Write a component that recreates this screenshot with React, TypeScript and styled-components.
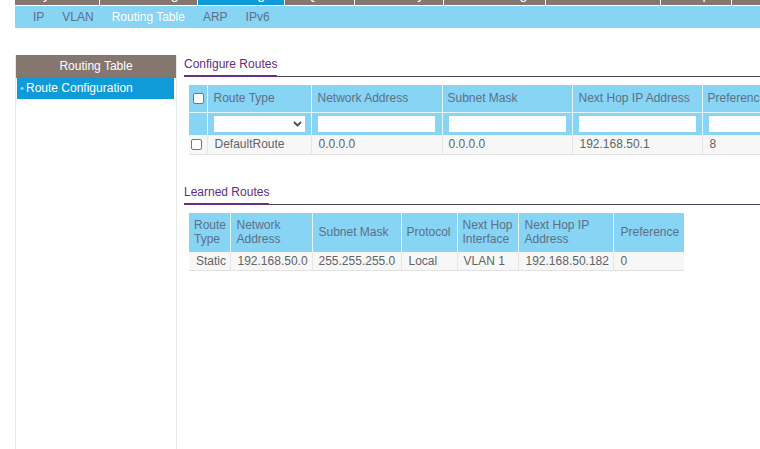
import React from 'react';
import styled, { createGlobalStyle } from 'styled-components';

const GlobalStyle = createGlobalStyle`
  html, body {
    margin: 0;
    padding: 0;
    background: #fff;
    overflow: hidden;
  }
  body {
    font-family: "Liberation Sans", Arial, sans-serif;
    font-size: 12px;
    color: #5b6670;
  }
`;

const Page = styled.div`
  width: 760px;
  height: 449px;
  overflow: hidden;
  padding-left: 15px;
  box-sizing: border-box;
`;

const TabBar = styled.div`
  display: flex;
  height: 5px;
  width: 800px;
  gap: 1px;
  overflow: hidden;
  margin-bottom: 1px;
`;

const Tab = styled.div<{ $w: number; $active?: boolean }>`
  flex: 0 0 ${(p) => p.$w}px;
  height: 5px;
  background: ${(p) => (p.$active ? '#0f9bd7' : '#85766f')};
  color: #fff;
  font-size: 14px;
  line-height: 16px;
  display: flex;
  align-items: flex-end;
  justify-content: center;
  white-space: nowrap;
`;

const TabLabel = styled.span`
  display: block;
  flex: none;
  margin-bottom: 3px;
`;

const SubNav = styled.div`
  display: flex;
  height: 22px;
  background: #87d4f5;
  align-items: center;
  padding-left: 18px;
  gap: 18px;
  font-size: 12px;
  margin-bottom: 27px;
`;

const SubItem = styled.span<{ $active?: boolean }>`
  color: ${(p) => (p.$active ? '#ffffff' : '#5c7085')};
`;

const Body = styled.div`
  display: flex;
  align-items: stretch;
  height: 394px;
`;

const Sidebar = styled.div`
  flex: 0 0 162px;
  box-sizing: border-box;
  border-right: 1px solid #e8e8e8;
  border-left: 1px solid #e8e8e8;
`;

const SideHead = styled.div`
  height: 23px;
  background: #85766f;
  color: #fff;
  text-align: center;
  line-height: 23px;
  font-size: 12px;
`;

const SideItem = styled.div`
  display: flex;
  align-items: center;
  height: 21px;
  margin: 0 2px 0 1px;
  background: #0f9bd7;
  color: #fff;
  font-size: 12px;
  padding-left: 3px;
  padding-bottom: 2px;
  box-sizing: border-box;
`;

const Bullet = styled.span`
  flex: 0 0 6px;
  color: #9adcf7;
  font-size: 11px;
`;

const Main = styled.div`
  flex: none;
  width: 576px;
  margin-left: 7px;
`;

const SectionHead = styled.div`
  height: 22px;
  box-sizing: border-box;
  border-bottom: 1px solid #4d4560;
`;

const SectionTitle = styled.span`
  display: inline-block;
  height: 22px;
  box-sizing: border-box;
  border-bottom: 2px solid #6a2c85;
  color: #5f2d83;
  font-size: 12px;
  line-height: 19px;
`;

const Table = styled.table<{ $w: number }>`
  border-collapse: collapse;
  table-layout: fixed;
  width: ${(p) => p.$w}px;
  margin-left: 5px;
  font-size: 12px;
`;

const Row = styled.tr<{ $h: number }>`
  height: ${(p) => p.$h}px;
`;

const HeadCell = styled.th<{ $pad?: number }>`
  background: #87d4f5;
  color: #5c7085;
  font-weight: normal;
  text-align: left;
  padding: 0 0 0 ${(p) => p.$pad ?? 5}px;
  border-left: 1px solid #e4f5fc;
  line-height: 14px;
  white-space: nowrap;
  overflow: hidden;
  &:first-child {
    border-left: none;
  }
`;

const FilterCell = styled.td`
  background: #87d4f5;
  padding: 1px 0 0 6px;
  height: 23px;
  box-sizing: border-box;
  border-top: 1px solid #e4f5fc;
  border-left: 1px solid #e4f5fc;
  &:first-child {
    border-left: none;
  }
`;

const DataCell = styled.td<{ $pad?: number }>`
  background: #f7f7f7;
  color: #5f6468;
  padding: 0 0 0 ${(p) => p.$pad ?? 6}px;
  border-left: 1px solid #e6e6e6;
  border-bottom: 1px solid #e2e2e2;
  white-space: nowrap;
  &:first-child {
    border-left: none;
  }
`;

const Check = styled.span<{ $left: number }>`
  display: block;
  width: 11px;
  height: 11px;
  box-sizing: border-box;
  background: #fff;
  border: 1px solid #73787c;
  border-radius: 2px;
  margin-left: ${(p) => p.$left}px;
`;

const FilterBox = styled.div`
  width: 117px;
  height: 16px;
  background: #fff;
`;

const FilterSelect = styled(FilterBox)`
  width: 91px;
  display: flex;
  align-items: center;
  justify-content: flex-end;
  padding-right: 3px;
  box-sizing: border-box;
`;

const Spacer = styled.div<{ $h: number }>`
  height: ${(p) => p.$h}px;
`;

const Chevron = () => (
  <svg width="9" height="6" viewBox="0 0 9 6" fill="none">
    <path d="M1 1l3.5 3.5L8 1" stroke="#555" strokeWidth="2" />
  </svg>
);

const tabs = [
  { label: 'System', w: 84 },
  { label: 'Switching', w: 97 },
  { label: 'Routing', w: 86, active: true },
  { label: 'QoS', w: 69 },
  { label: 'Security', w: 88 },
  { label: 'Monitoring', w: 101 },
  { label: 'Maintenance', w: 114 },
  { label: 'Help', w: 70 },
  { label: 'Index', w: 60 },
];

const subItems = ['IP', 'VLAN', 'Routing Table', 'ARP', 'IPv6'];

const configCols = [18, 104, 131, 130, 130, 63];
const learnedCols = [41, 82, 89, 56, 61, 95, 71];

export default function App() {
  return (
    <Page>
      <GlobalStyle />
      <TabBar>
        {tabs.map((t) => (
          <Tab key={t.label} $w={t.w} $active={t.active}>
            <TabLabel>{t.label}</TabLabel>
          </Tab>
        ))}
      </TabBar>
      <SubNav>
        {subItems.map((s) => (
          <SubItem key={s} $active={s === 'Routing Table'}>
            {s}
          </SubItem>
        ))}
      </SubNav>
      <Body>
        <Sidebar>
          <SideHead>Routing Table</SideHead>
          <SideItem>
            <Bullet>•</Bullet>
            Route Configuration
          </SideItem>
        </Sidebar>
        <Main>
          <SectionHead>
            <SectionTitle>Configure Routes</SectionTitle>
          </SectionHead>
          <Spacer $h={8} />
          <Table $w={576}>
            <colgroup>
              {configCols.map((w, i) => (
                <col key={i} width={w} />
              ))}
            </colgroup>
            <thead>
              <Row $h={27}>
                <HeadCell $pad={0}>
                  <Check $left={4} />
                </HeadCell>
                <HeadCell $pad={6}>Route Type</HeadCell>
                <HeadCell $pad={6}>Network Address</HeadCell>
                <HeadCell>Subnet Mask</HeadCell>
                <HeadCell $pad={6}>Next Hop IP Address</HeadCell>
                <HeadCell>Preference</HeadCell>
              </Row>
              <tr>
                <FilterCell />
                <FilterCell>
                  <FilterSelect>
                    <Chevron />
                  </FilterSelect>
                </FilterCell>
                <FilterCell>
                  <FilterBox />
                </FilterCell>
                <FilterCell>
                  <FilterBox />
                </FilterCell>
                <FilterCell>
                  <FilterBox />
                </FilterCell>
                <FilterCell>
                  <FilterBox />
                </FilterCell>
              </tr>
            </thead>
            <tbody>
              <Row $h={19}>
                <DataCell $pad={0}>
                  <Check $left={2} />
                </DataCell>
                <DataCell $pad={7}>DefaultRoute</DataCell>
                <DataCell $pad={7}>0.0.0.0</DataCell>
                <DataCell>0.0.0.0</DataCell>
                <DataCell $pad={7}>192.168.50.1</DataCell>
                <DataCell $pad={7}>8</DataCell>
              </Row>
            </tbody>
          </Table>
          <Spacer $h={28} />
          <SectionHead>
            <SectionTitle>Learned Routes</SectionTitle>
          </SectionHead>
          <Spacer $h={8} />
          <Table $w={495}>
            <colgroup>
              {learnedCols.map((w, i) => (
                <col key={i} width={w} />
              ))}
            </colgroup>
            <thead>
              <Row $h={39}>
                <HeadCell>
                  Route
                  <br />
                  Type
                </HeadCell>
                <HeadCell $pad={6}>
                  Network
                  <br />
                  Address
                </HeadCell>
                <HeadCell $pad={6}>Subnet Mask</HeadCell>
                <HeadCell>Protocol</HeadCell>
                <HeadCell>
                  Next Hop
                  <br />
                  Interface
                </HeadCell>
                <HeadCell $pad={6}>
                  Next Hop IP
                  <br />
                  Address
                </HeadCell>
                <HeadCell $pad={7}>Preference</HeadCell>
              </Row>
            </thead>
            <tbody>
              <Row $h={19}>
                <DataCell $pad={7}>Static</DataCell>
                <DataCell $pad={7}>192.168.50.0</DataCell>
                <DataCell>255.255.255.0</DataCell>
                <DataCell $pad={7}>Local</DataCell>
                <DataCell>VLAN 1</DataCell>
                <DataCell $pad={7}>192.168.50.182</DataCell>
                <DataCell $pad={7}>0</DataCell>
              </Row>
            </tbody>
          </Table>
        </Main>
      </Body>
    </Page>
  );
}
